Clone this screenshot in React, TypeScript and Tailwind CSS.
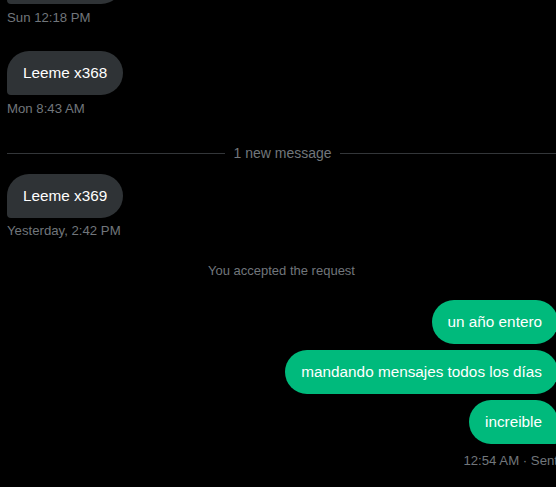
const font = { fontFamily: '"Liberation Sans", Arial, sans-serif' };

type Msg = { text: string };

function Received({ text, className = '' }: { text: string; className?: string }) {
  return (
    <div
      className={`self-start rounded-[22px] rounded-bl-[4px] bg-[#2f3336] px-4 py-3 text-[15.3px] leading-5 text-white ${className}`}
    >
      {text}
    </div>
  );
}

function Sent({ text, last }: { text: string; last?: boolean }) {
  return (
    <div
      className={`self-end rounded-[22px] bg-[#00ba7c] px-4 py-3 text-[15.3px] leading-5 text-white ${
        last ? 'rounded-br-[4px]' : ''
      }`}
    >
      {text}
    </div>
  );
}

function Stamp({ children, className = '' }: { children: React.ReactNode; className?: string }) {
  return (
    <div className={`text-[13.2px] leading-4 text-[#71767b] ${className}`}>
      {children}
    </div>
  );
}

const outgoing: Msg[] = [
  { text: 'un año entero' },
  { text: 'mandando mensajes todos los días' },
  { text: 'increible' },
];

export default function App() {
  return (
    <div className="h-[487px] w-[556px] overflow-hidden bg-black" style={font}>
      <div className="flex w-[558px] flex-col pl-[7px]">
        {/* tail of the previous message, scrolled mostly out of view */}
        <Received text="Leeme x367" className="-mt-[40px]" />
        <Stamp className="mt-[6px] self-start">Sun 12:18 PM</Stamp>

        <Received text="Leeme x368" className="mt-[25px]" />
        <Stamp className="mt-[6px] self-start">Mon 8:43 AM</Stamp>

        <div className="mt-[26px] flex items-center gap-2">
          <div className="h-px flex-1 bg-[#333639]" />
          <span className="text-[14px] leading-5 text-[#71767b]">1 new message</span>
          <div className="h-px flex-1 bg-[#333639]" />
        </div>

        <Received text="Leeme x369" className="mt-[11px]" />
        <Stamp className="mt-[5px] self-start">Yesterday, 2:42 PM</Stamp>

        <div className="mt-[24px] pr-[2px] text-center text-[13px] leading-4 text-[#71767b]">
          You accepted the request
        </div>

        <div className="mt-[21px] flex flex-col gap-[6px]">
          {outgoing.map((m, i) => (
            <Sent key={m.text} text={m.text} last={i === outgoing.length - 1} />
          ))}
        </div>
        <Stamp className="mt-[9px] self-end">12:54 AM · Sent</Stamp>
      </div>
    </div>
  );
}
